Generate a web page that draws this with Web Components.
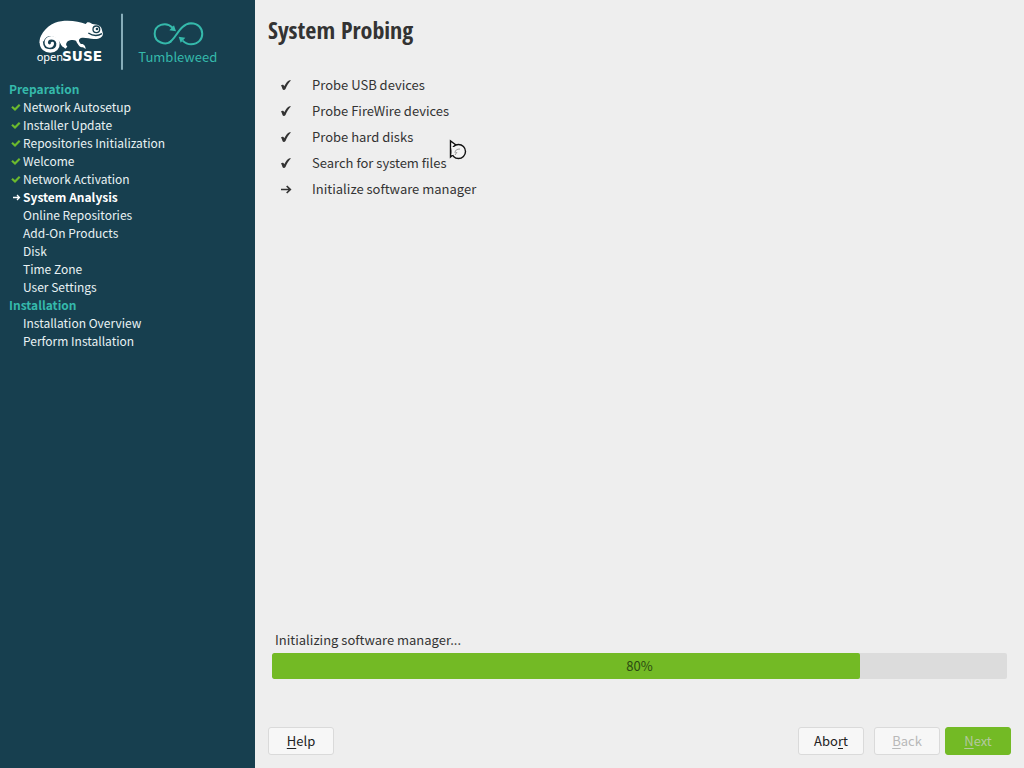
<!DOCTYPE html>
<html lang="en">
<head>
<meta charset="utf-8">
<title>System Probing</title>
<style>
  html, body { height: 100%; margin: 0; }
  body { font: 13px/18px "Noto Sans CJK SC", "Noto Sans", sans-serif; color: #333; background: #eee; }
</style>
</head>
<body>
<installer-window>
  <installer-sidebar slot="sidebar">
    <product-logo></product-logo>
    <step-group label="Preparation">
      <wizard-step state="done">Network Autosetup</wizard-step>
      <wizard-step state="done">Installer Update</wizard-step>
      <wizard-step state="done">Repositories Initialization</wizard-step>
      <wizard-step state="done">Welcome</wizard-step>
      <wizard-step state="done">Network Activation</wizard-step>
      <wizard-step state="current">System Analysis</wizard-step>
      <wizard-step>Online Repositories</wizard-step>
      <wizard-step>Add-On Products</wizard-step>
      <wizard-step>Disk</wizard-step>
      <wizard-step>Time Zone</wizard-step>
      <wizard-step>User Settings</wizard-step>
    </step-group>
    <step-group label="Installation">
      <wizard-step>Installation Overview</wizard-step>
      <wizard-step>Perform Installation</wizard-step>
    </step-group>
  </installer-sidebar>
  <probe-page heading="System Probing">
    <probe-item state="done">Probe USB devices</probe-item>
    <probe-item state="done">Probe FireWire devices</probe-item>
    <probe-item state="done">Probe hard disks</probe-item>
    <probe-item state="done">Search for system files</probe-item>
    <probe-item state="current">Initialize software manager</probe-item>
    <progress-panel slot="progress" label="Initializing software manager..." value="80"></progress-panel>
    <wizard-buttons slot="buttons"></wizard-buttons>
  </probe-page>
</installer-window>
<busy-cursor></busy-cursor>

<script>
const define = (name, html, setup) => {
  const template = document.createElement("template");
  template.innerHTML = html;
  customElements.define(name, class extends HTMLElement {
    constructor() {
      super();
      this.attachShadow({ mode: "open" }).append(template.content.cloneNode(true));
    }
    connectedCallback() { if (setup) setup(this, this.shadowRoot); }
  });
};

define("installer-window", `
  <style>
    :host { display: grid; grid-template-columns: 255px 1fr; min-height: 100vh; }
  </style>
  <slot name="sidebar"></slot><slot></slot>`);

define("installer-sidebar", `
  <style>
    :host { display: block; background: #173f4f; color: #e9f2f4; font-size: 12px; }
  </style>
  <nav aria-label="Installation steps"><slot></slot></nav>`);

define("product-logo", `
  <style>
    :host { display: block; height: 80px; }
    svg { display: block; width: 255px; height: 80px; }
  </style>
  <svg viewBox="0 0 765 240" role="img" aria-label="openSUSE Tumbleweed">
    <path fill="#fff" d="M262 67 C270 65 274 72 282 73 C296 74 305 80 306 91 L309 102 C307 112 299 117 285 117 C270 118 258 112 243 114 C234 118 236 125 243 132 C251 130 257 138 257 147 L249 142 C243 143 235 138 228 122 C220 119 210 120 203 124 C198 130 196 135 202 140 L196 146 L190 141 C184 139 181 127 174 119 C160 104 138 104 131 124 L119 130 C115 111 135 80 165 68 C196 57 235 63 257 72 Z"/>
    <path fill="none" stroke="#fff" stroke-width="10" stroke-linecap="round" d="M124 127 C124 144 136 153 151 153 C166 153 175 143 174 130 C173 116 158 110 147 115 C136 120 136 135 147 138 C153 139 158 135 157 130"/>
    <circle cx="289" cy="88" r="10" fill="#fff" stroke="#173f4f" stroke-width="4"/>
    <circle cx="291" cy="87" r="4" fill="#173f4f"/>
    <path d="M265 99 C280 109 293 109 306 101" fill="none" stroke="#173f4f" stroke-width="4"/>
    <text x="110" y="182" fill="#fff" font-family="Noto Sans" font-size="33">open</text>
    <text x="186" y="182" fill="#fff" font-family="DejaVu Sans" font-weight="bold" font-size="41">SUSE</text>
    <path d="M366 41 V209" stroke="#9fc4cf" stroke-width="5"/>
    <g fill="none" stroke="#35b9ab" stroke-width="6">
      <path d="M514 124 C497 138 464 127 464 101 C464 76 496 62 518 83"/>
      <path d="M506 128 C529 119 536 72 573 70 C617 70 619 132 573 133 C561 133 554 128 548 122"/>
    </g>
    <path fill="#35b9ab" d="M528 94 L508 91 L522 76 Z M536 110 L556 113 L542 128 Z"/>
    <text x="415" y="185" fill="#35b9ab" font-family="Noto Sans CJK SC" font-size="39">Tumbleweed</text>
  </svg>`);

define("step-group", `
  <style>
    :host { display: block; padding-left: 9px; }
    h2 { margin: 0; font-size: 12px; line-height: 18px; font-weight: 700; color: #35b9ab; }
  </style>
  <h2></h2><div role="list"><slot></slot></div>`,
  (el, root) => { root.querySelector("h2").textContent = el.getAttribute("label"); });

define("wizard-step", `
  <style>
    :host { display: grid; grid-template-columns: 14px 1fr; align-items: center; height: 18px; white-space: nowrap; }
    :host([state="current"]) { color: #fff; font-weight: bold; }
    svg { display: none; width: 14px; height: 14px; fill: none; }
    span { grid-column: 2; grid-row: 1; }
    :host([state="done"]) .done, :host([state="current"]) .current { display: block; grid-row: 1; }
  </style>
  <svg class="done" viewBox="0 0 14 14" aria-hidden="true"><path d="M3 6.7 L6 9.5 L10.7 4.8" stroke="#6cba2d" stroke-width="2.2"/></svg>
  <svg class="current" viewBox="0 0 14 14" aria-hidden="true"><path d="M4 7.5 H10 M8 5 L10.5 7.5 L8 10" stroke="#fff" stroke-width="1.3"/></svg>
  <span><slot></slot></span>`,
  el => el.setAttribute("role", "listitem"));

define("probe-page", `
  <style>
    :host { display: flex; flex-direction: column; padding: 12px 13px 13px; }
    h1 { margin: 0 0 24px; font: bold 24px/36px "Open Sans Condensed", "Liberation Sans Narrow", "Noto Sans CJK SC", sans-serif; }
    .items { flex: 1; }
    .buttons { margin-top: 48px; }
    .progress { padding: 0 4px; }
  </style>
  <h1></h1>
  <div class="items" role="list"><slot></slot></div>
  <div class="progress"><slot name="progress"></slot></div>
  <div class="buttons"><slot name="buttons"></slot></div>`,
  (el, root) => { root.querySelector("h1").textContent = el.getAttribute("heading"); });

define("probe-item", `
  <style>
    :host { display: grid; grid-template-columns: 12px 1fr; column-gap: 20px; align-items: center; height: 26px; padding-left: 12px; }
    svg { display: none; width: 12px; height: 12px; }
    :host([state="done"]) .done, :host([state="current"]) .current { display: block; }
  </style>
  <svg class="done" viewBox="0 0 12 12" aria-hidden="true"><path fill="#333" d="M1 6.3 C2.5 5.2 3.7 5.6 4.3 7.2 C5.8 4.3 7.4 2.2 9 1.5 C9.8 1.2 10.4 1.2 11 1.3 C8.6 3.9 6.9 6.7 5.5 10 C4.7 11.3 3.1 11.3 2.6 10.2 C2.2 8.9 1.7 7.4 1 6.3 Z"/></svg>
  <svg class="current" viewBox="0 0 12 12" aria-hidden="true"><path fill="none" stroke="#333" stroke-width="1.7" d="M1 6.5 H10 M6.7 3 L10.3 6.5 L6.7 10"/></svg>
  <span><slot></slot></span>`,
  el => el.setAttribute("role", "listitem"));

define("progress-panel", `
  <style>
    :host { display: block; }
    label { display: block; padding: 0 3px; margin-bottom: 4px; }
    .bar { display: grid; height: 26px; }
    .bar > * { grid-area: 1 / 1; }
    progress { appearance: none; display: block; width: 100%; height: 26px; border: 0; border-radius: 2px; overflow: hidden; }
    progress::-webkit-progress-bar { background: #dcdcdc; }
    progress::-webkit-progress-value { background: #73ba25; border-radius: 2px; }
    output { place-self: center; position: relative; color: #2b4a12; }
  </style>
  <label for="bar"></label>
  <div class="bar"><progress id="bar" max="100"></progress><output for="bar"></output></div>`,
  (el, root) => {
    const value = el.getAttribute("value");
    root.querySelector("label").textContent = el.getAttribute("label");
    root.querySelector("progress").value = value;
    root.querySelector("output").textContent = value + "%";
  });

define("wizard-buttons", `
  <style>
    :host { display: flex; }
    button { box-sizing: border-box; width: 66px; height: 28px; padding: 0; border: 1px solid #dadada; border-radius: 3px;
      background: #f7f7f7; color: #222; font: inherit; }
    .abort { margin-left: auto; margin-right: 10px; }
    button:disabled { color: #b9b9b9; }
    .next { margin-left: 5px; }
    .next:disabled { background: #73ba25; border-color: #73ba25; color: #b4c8a0; }
    u { text-underline-offset: 2px; text-decoration-thickness: 1px; text-decoration-skip-ink: none; }
  </style>
  <button type="button"><u>H</u>elp</button>
  <button type="button" class="abort">Abo<u>r</u>t</button>
  <button type="button" disabled><u>B</u>ack</button>
  <button type="button" class="next" disabled><u>N</u>ext</button>`);

define("busy-cursor", `
  <style>
    :host { position: absolute; left: 448px; top: 138px; width: 20px; height: 24px; pointer-events: none; }
    svg { display: block; }
  </style>
  <svg width="20" height="24" viewBox="0 0 20 24" aria-hidden="true">
    <path d="M2.5 3 V19 L6 16 L12 10 Z" fill="#fff" stroke="#111" stroke-width="1.4"/>
    <circle cx="10.5" cy="13.5" r="7" fill="#f4f4f4" stroke="#111" stroke-width="1.4"/>
    <path d="M3.5 9 L8 9 L5 17 L3.5 17 Z" fill="#f4f4f4"/>
    <path d="M7 15 C7 12 9 11 12 11 M7 17 L9 14" fill="none" stroke="#999" stroke-width="1"/>
  </svg>`);
</script>
</body>
</html>
